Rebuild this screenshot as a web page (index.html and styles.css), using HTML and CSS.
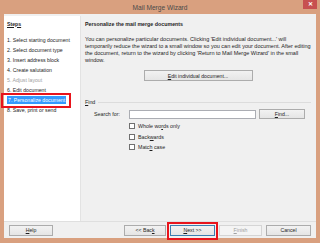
FILE: index.html
```html
<!DOCTYPE html>
<html lang="en">
<head>
    <meta charset="UTF-8">
    <title>Mail Merge Wizard</title>
    <link rel="stylesheet" href="styles.css">
</head>
<body>
    <div class="window">
        <div class="titlebar">
            <span class="title">Mail Merge Wizard</span>
            <span class="close">&#x2715;</span>
        </div>
        <div class="client">
            <div class="main">
                <div class="steps">
                    <div class="steps-title">Steps</div>
                    <ul class="step-list">
                        <li>1. Select starting document</li>
                        <li>2. Select document type</li>
                        <li>3. Insert address block</li>
                        <li>4. Create salutation</li>
                        <li class="disabled">5. Adjust layout</li>
                        <li>6. Edit document</li>
                        <li><span class="current">7. Personalize document</span></li>
                        <li>8. Save, print or send</li>
                    </ul>
                </div>
                <div class="page">
                    <div class="page-title">Personalize the mail merge documents</div>
                    <p class="intro">You can personalize particular documents. Clicking 'Edit individual document...' will temporarily reduce the wizard to a small window so you can edit your document. After editing the document, return to the wizard by clicking 'Return to Mail Merge Wizard' in the small window.</p>
                    <div class="center">
                        <button class="btn btn-edit"><u>E</u>dit individual document...</button>
                    </div>
                    <div class="group-title"><span><u>F</u>ind</span></div>
                    <div class="search-row">
                        <label class="search-label">Search for:</label>
                        <input class="search-input" type="text">
                        <button class="btn btn-find"><u>F</u>ind...</button>
                    </div>
                    <div class="checks">
                        <div class="check-row"><span class="box"></span><span>Whole wo<u>r</u>ds only</span></div>
                        <div class="check-row"><span class="box"></span><span>Back<u>w</u>ards</span></div>
                        <div class="check-row"><span class="box"></span><span>Matc<u>h</u> case</span></div>
                    </div>
                </div>
            </div>
            <div class="footer">
                <button class="btn btn-help"><u>H</u>elp</button>
                <div class="nav">
                    <button class="btn btn-back">&lt;&lt; Bac<u>k</u></button>
                    <button class="btn btn-next"><u>N</u>ext &gt;&gt;</button>
                    <button class="btn disabled"><u>F</u>inish</button>
                    <button class="btn btn-cancel">Cancel</button>
                </div>
            </div>
        </div>
        <div class="mark mark-step"></div>
        <div class="mark mark-next"></div>
    </div>
</body>
</html>
```

FILE: styles.css
```css
body {
    margin: 0;
    font-family: 'Liberation Sans', Arial, sans-serif;
    color: #1e1e1e;
}
.window {
    position: relative;
    width: 320px;
    height: 243px;
    box-sizing: border-box;
    padding: 0 4px 5px 4px;
    background: #d9a07f;
    display: flex;
    flex-direction: column;
}
.titlebar {
    height: 14px;
    position: relative;
    display: flex;
    justify-content: center;
    align-items: center;
}
.title {
    font-size: 6.6px;
    color: #4a4a4a;
}
.close {
    position: absolute;
    top: 0;
    right: -1px;
    width: 14px;
    height: 9px;
    background: #c75050;
    color: white;
    font-size: 6px;
    font-weight: bold;
    line-height: 9px;
    text-align: center;
}
.client {
    flex: 1;
    background: #f0f0f0;
    padding-top: 2px;
    display: flex;
    flex-direction: column;
}
.main {
    flex: 1;
    display: flex;
}
.steps {
    width: 77px;
    background: white;
    border-right: 1px solid #e3e3e3;
    padding-left: 3px;
    box-sizing: border-box;
    font-size: 5.2px;
}
.steps-title {
    margin-top: 4.5px;
    line-height: 7px;
    font-weight: bold;
    text-decoration: underline;
}
.step-list {
    list-style: none;
    margin: 7px 0 0 0;
    padding: 0;
}
.step-list li {
    height: 10px;
    line-height: 10px;
}
.step-list .disabled {
    color: #a0a0a0;
}
.current {
    background: #3399ff;
    color: white;
    padding: 1px 1px;
}
.page {
    flex: 1;
    padding: 0 5px 0 4px;
    font-size: 5.5px;
}
.page-title {
    margin-top: 4.5px;
    line-height: 7px;
    font-size: 5.3px;
    font-weight: bold;
}
.intro {
    margin: 8px 0 0 0;
    line-height: 7px;
}
.center {
    display: flex;
    justify-content: center;
    margin-top: 6.5px;
}
.btn {
    font-family: inherit;
    font-size: 5.2px;
    color: #1e1e1e;
    height: 11px;
    padding: 0;
    border: 1px solid #acacac;
    border-radius: 0;
    background: linear-gradient(#f2f2f2, #e5e5e5);
}
.btn-edit {
    width: 109px;
}
.group-title {
    display: flex;
    align-items: center;
    gap: 3px;
    margin-top: 17.5px;
    line-height: 7px;
    font-size: 5.3px;
}
.group-title::after {
    content: "";
    flex: 1;
    border-top: 1px solid #dcdcdc;
}
.search-row {
    display: flex;
    align-items: center;
    margin-top: 3.5px;
    height: 10px;
    padding-left: 9px;
    font-size: 5.3px;
}
.search-label {
    width: 35px;
}
.search-input {
    width: 127px;
    height: 9px;
    box-sizing: border-box;
    border: 1px solid #abadb3;
    padding: 0;
    margin: 0 3px 0 0;
    background: white;
}
.btn-find {
    width: 46px;
    height: 10px;
}
.checks {
    margin-top: 2px;
    font-size: 5.3px;
}
.check-row {
    display: flex;
    align-items: center;
    gap: 3px;
    height: 10.5px;
    padding-left: 44px;
}
.box {
    width: 6px;
    height: 6px;
    box-sizing: border-box;
    border: 1px solid #707070;
    background: white;
}
.footer {
    height: 17px;
    box-sizing: border-box;
    border-top: 1px solid #dfdfdf;
    display: flex;
    justify-content: space-between;
    align-items: center;
    padding: 0 5px;
}
.footer .btn {
    width: 43px;
    height: 11px;
}
.footer .btn-help {
    width: 44px;
}
.nav {
    display: flex;
    gap: 4px;
}
.footer .btn-back {
    width: 42px;
}
.footer .btn-next {
    width: 45px;
    border-color: #3c7fb1;
}
.footer .btn-cancel {
    width: 45px;
}
.btn.disabled {
    color: #a0a0a0;
    border-color: #d5d5d5;
    background: #f4f4f4;
}
.mark {
    position: absolute;
    border: 2px solid #e8141c;
    box-sizing: border-box;
}
.mark-step {
    left: 1px;
    top: 93px;
    width: 70px;
    height: 15px;
}
.mark-next {
    left: 167px;
    top: 222px;
    width: 51px;
    height: 18px;
}
```
